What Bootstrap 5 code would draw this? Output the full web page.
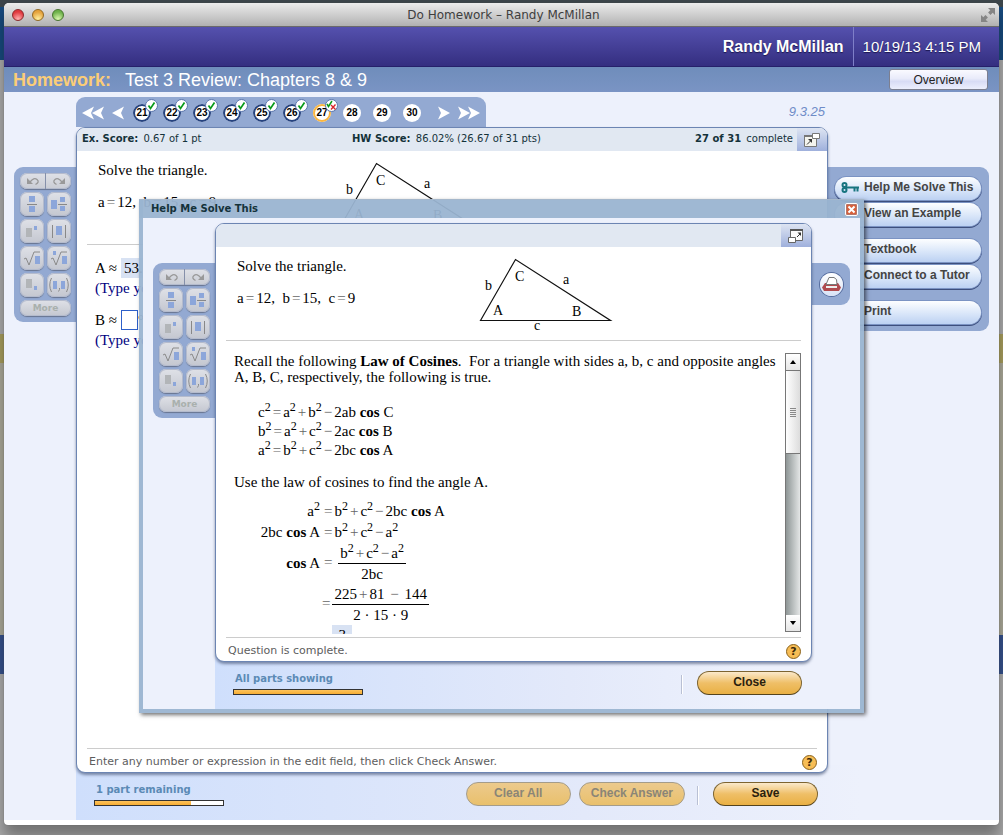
<!DOCTYPE html>
<html lang="en">
<head>
<meta charset="utf-8">
<meta name="viewport" content="width=device-width, initial-scale=1">
<title>Do Homework – Randy McMillan</title>
<link href="https://cdn.jsdelivr.net/npm/bootstrap@5.3.0/dist/css/bootstrap.min.css" rel="stylesheet">
<style>
  :root {
    --panel: #93a9d2;
    --page: #edf1fc;
    --edge: #6c85b3;
    --verdana: "DejaVu Sans", Verdana, sans-serif;
    --arial: "Liberation Sans", Arial, sans-serif;
    --times: "Liberation Serif", "Times New Roman", serif;
  }
  body {
    min-height: 100vh;
    padding: 3px 4px 10px;
    font-family: var(--arial);
    font-size: 12px;
    line-height: 16px;
    color: #000;
    background: linear-gradient(#3c454a 0 7px, #17497c 7px 60px, #a9a9a9 60px 334px, #a69c5c 334px 363px, #a9a797 363px 635px, #35508a 635px 674px, #a9a9a9 674px);
  }
  button { font-family: inherit; padding: 0; border: 0; background: none; }
  svg { display: block; }

  /* application window */
  .app-window { min-height: calc(100vh - 13px); border-radius: 5px 5px 4px 4px; background: #fff; padding-bottom: 5px; box-shadow: 0 0 1px 0 #555, 0 12px 14px 0 rgba(0,0,0,.32); }
  .titlebar { height: 24px; border-bottom: 1px solid #6a6a6a; border-radius: 5px 5px 0 0; background: linear-gradient(#ececec, #b1b1b1); padding: 0 4px 0 8px; }
  .titlebar h1 { font: 12px/22px var(--verdana); color: #3e3e3e; margin: 0; }
  .light { width: 12px; height: 12px; border-radius: 50%; border: 1px solid; }
  .light-red { background: radial-gradient(circle at 50% 90%, #ffb0b0, #e0383e 70%); border-color: #8d2a2c; }
  .light-amber { background: radial-gradient(circle at 50% 90%, #fff0a0, #e5a23c 70%); border-color: #936a22; }
  .light-green { background: radial-gradient(circle at 50% 90%, #dcf8b0, #6db14a 70%); border-color: #47752f; }
  .lights { gap: 8px; }
  .side { width: 72px; }
  .user-bar { height: 40px; border-bottom: 1px solid #26206a; background: linear-gradient(#5551ae, #342e80); color: #fff; text-shadow: 0 1px 1px #1c1850; }
  .user-name { font-size: 16px; font-weight: bold; padding-right: 9px; }
  .user-time { font-size: 15px; padding: 0 18px 0 9px; border-left: 1px solid #7f7fc8; line-height: 39px; }
  .course-bar { height: 25px; background: linear-gradient(#6f8dbb, #7a94c4); padding: 0 11px 0 9px; color: #fff; }
  .course-bar h2 { font-size: 18px; line-height: 24px; margin: 0; font-weight: normal; }
  .course-bar strong { color: #fbcd77; margin-right: 14px; }
  .btn-overview { width: 99px; height: 21px; border: 1px solid #7c7f90; border-radius: 3px; background: linear-gradient(#fafaff, #e9ebfa 45%, #d8dcf5 60%, #eceffd); color: #222; }

  /* shared work area: side rails, sheet, action bar */
  .workspace { background: var(--page); }
  .rail-left { width: 72px; padding: 40px 0 0 10px; flex-shrink: 0; }
  .rail-left-main { padding-top: 75px; }
  .rail-right-main { width: 171px; flex-shrink: 0; }
  .rail-right-help { width: 48px; padding-top: 40px; flex-shrink: 0; }
  .palette { background: var(--panel); border-radius: 9px 0 0 9px; padding: 6px 5px 6px 6px; display: grid; grid-template-columns: 24px 24px; gap: 3px; }
  .tool-key { height: 24px; border-radius: 7px; background: linear-gradient(#dfe1e7, #c4c7d0); box-shadow: 0 0 0 1px #b4bbcd inset, 0 1px 1px #68748f; }
  .tool-key svg { margin: auto; }
  .history { grid-column: span 2; height: 16px; border-radius: 7px; overflow: hidden; background: linear-gradient(#dfe1e7, #c9ccd4); box-shadow: 0 0 0 1px #b4bbcd inset, 0 1px 1px #68748f; }
  .history button { flex: 1; }
  .history button + button { border-left: 1px solid #8590aa; }
  .history svg { margin: auto; }
  .key-more { grid-column: span 2; height: 16px; font: bold 9px/14px var(--verdana); color: #a9b0ad; }
  .sheet { background: #fff; border: 1px solid var(--edge); border-radius: 9px; box-shadow: 0 2px 3px rgba(60,75,110,.6); overflow: hidden; position: relative; }
  .sheet-head { height: 23px; background: #e1e8f2; font: 10px/22px var(--verdana); color: #14323a; }
  .sheet-head .scores { padding-left: 5px; }
  .sheet-head .score-ex { width: 270px; }
  .sheet-head b { margin-right: 2px; }
  .pop-btn { width: 30px; height: 23px; background: linear-gradient(#dde4f2, #9fb0dc); }
  .question { min-height: 94px; margin: 0 10px; padding-left: 11px; border-bottom: 1px solid #ccc; }
  .question-text { width: 238px; padding-top: 11px; }
  .question-text p { margin-bottom: 16px; }
  .serif { font-family: var(--times); font-size: 15px; line-height: 16px; }
  .eq { color: #666; margin: 0 2px; }
  .figure { margin-top: 7px; }
  .figure text { font-family: var(--times); font-size: 14px; }
  .sheet-foot { height: 24px; margin: 0 10px; border-top: 1px solid #ccc; font: 11px/16px var(--verdana); color: #5d5d5d; padding: 3px 0 0 2px; }
  .help-dot { width: 15px; height: 15px; border: 1px solid #8a621c; border-radius: 50%; background: #f7bd55; font: bold 11px/13px var(--verdana); color: #3c2a08; }
  .action-bar { height: 55px; background: linear-gradient(90deg, #cfdffc, #e3e9fa 55%, var(--page) 85%); margin: -8px 0 0 72px; padding: 17px 0 0 18px; }
  .action-bar-main { padding-right: 181px; }
  .action-bar-help { padding-right: 58px; }
  .progress-label { font: bold 10px/16px var(--verdana); color: #5b8ab5; padding-left: 2px; }
  .meter { width: 130px; height: 6px; border: 1px solid #333; border-radius: 0; background: #fff; margin-top: 2px; }
  .meter .progress-bar { background: linear-gradient(#fdc35c, #f6ad33); }
  .pill { min-width: 105px; height: 24px; border: 1px solid #7d6431; border-bottom-color: #54431d; border-radius: 12px; background: linear-gradient(#fbe9cb, #efbf67 50%, #e9b044); font-weight: bold; font-size: 12px; line-height: 18px; padding: 0 11px 3px; color: #2a210e; }
  .pill:disabled { background: linear-gradient(#ecca8d, #e9c06c); border-color: #a49c8a; color: #8a8577; }
  .bar-divider { width: 2px; height: 19px; border-left: 1px solid #b9c0d4; border-right: 1px solid #fff; margin: 4px 14px 0 12px; }

  /* question navigator */
  .nav-row { padding-top: 1px; }
  .qnav { background: var(--panel); border-radius: 9px 9px 0 0; height: 30px; padding: 2px 6px 0 6px; }
  .qnav-list { gap: 12px; margin: 0 17px 0 9px; }
  .q-dot { position: relative; width: 18px; height: 18px; border-radius: 50%; background: #fff; font-weight: bold; font-size: 10px; line-height: 18px; text-align: center; color: #000; }
  .q-done { box-shadow: 0 0 0 2px #26437f inset; }
  .q-current { box-shadow: 0 0 0 2px #fbb63f inset; }
  .q-flag { position: absolute; left: 12px; top: -5px; }
  .section-no { font-size: 13px; font-style: italic; color: #6f8cc8; padding-right: 3px; }

  /* right-hand help links */
  .help-panel { margin-top: 75px; width: 161px; background: var(--panel); border-radius: 0 9px 9px 0; padding: 10px 8px 7px 7px; }
  .help-link { height: 23px; border-radius: 12px; background: linear-gradient(#fdfeff, #d9e6f9 55%, #bcd1f2); box-shadow: 0 0 0 1px #7b93c3, 0 1px 0 1px #3d4f7d; font-weight: bold; line-height: 20px; color: #444; text-decoration: none; padding-left: 6px; margin-bottom: 3px; }
  .help-link.section-end { margin-bottom: 13px; }
  .help-link .ico { width: 23px; }
  .print-panel { background: var(--panel); width: 38px; height: 42px; border-radius: 0 9px 9px 0; }
  .print-btn { width: 23px; height: 23px; border-radius: 50%; background: linear-gradient(#fff, #d7e2f6); box-shadow: 0 0 0 1px #566d9f; }

  /* answer fields in the exercise */
  .answers { padding: 13px 0 0 18px; }
  .answers .hint { color: #000080; margin: 2px 0 14px; }
  .given { background: #d8e2f3; height: 20px; padding: 2px 3px; margin-left: 4px; }
  .answer-box { width: 17px; height: 20px; border: 1px solid #2d5fc9; margin-left: 4px; padding: 0; }

  /* floating help dialog */
  .help-dialog { position: absolute; left: 135px; right: 135px; top: 196px; border: 4px solid rgba(154,180,209,.95); border-top: 0; background-clip: padding-box; box-shadow: 2px 2px 4px rgba(0,0,0,.55); z-index: 5; }
  .dialog-title { margin: 0 -4px; height: 19px; border-top: 1px solid #a5b7cb; background: rgba(154,180,209,.95); padding: 0 6px 0 12px; }
  .dialog-title h3 { font: bold 10px/18px var(--verdana); color: #14323a; margin: 0; }
  .dialog-close { width: 13px; height: 13px; border: 1px solid #fff; background: #d7603b; border-radius: 2px; box-shadow: 0 0 0 1px #b5766a inset; }
  .dialog-body { padding-top: 5px; }

  /* scrolling lesson text */
  .lesson { height: 281px; margin: 12px 10px 3px 18px; }
  .lesson-text { overflow: hidden; flex: 1; min-width: 0; }
  .lesson-text p { margin: 0; }
  .lesson-text .next-step { padding-top: 14px; }
  .laws { padding: 18px 0 0 24px; line-height: 19px; }
  .lesson sup { font-size: 12px; line-height: 0; top: -6px; vertical-align: baseline; }
  .steps { display: grid; grid-template-columns: 86px auto; align-items: center; margin-top: 11px; line-height: 21px; }
  .steps .lhs { text-align: right; }
  .steps .rhs { padding-left: 2px; }
  .frac { display: inline-block; text-align: center; vertical-align: middle; }
  .frac > span { display: block; line-height: 20px; }
  .frac > span:first-child { border-bottom: 1px solid #000; padding: 0 2px; }
  .frac-known { background: #d8e2f3; padding: 0 4px; }
  .vbar { width: 16px; height: 279px; border: 1px solid #777; background: linear-gradient(90deg, #8e9696, #e4e6e6); }
  .vbar button { height: 16px; background: linear-gradient(#fff, #e6e6e6); }
  .vbar button svg { margin: auto; }
  .vthumb { height: 84px; border: 1px solid #777; border-width: 1px 0; background: linear-gradient(90deg, #fff, #dcdcdc); }
</style>
</head>
<body>

<svg width="0" height="0" class="position-absolute" aria-hidden="true">
  <symbol id="i-frac" viewBox="0 0 16 18"><path fill="#8ca6da" d="M5 1h6v6H5zM5 11h6v6H5z"/><path stroke="#888" d="M3 9.5h10"/></symbol>
  <symbol id="i-mixed" viewBox="0 0 18 18"><path fill="#8ca6da" d="M1 5h6v9H1zM10 2h5v5h-5zM10 11h5v5h-5z"/><path stroke="#888" d="M8 9.500h9"/></symbol>
  <symbol id="i-sup" viewBox="0 0 16 18"><path fill="#b2b5b8" d="M2 6h6v9H2z"/><path fill="#8ca6da" d="M10 4h3v4h-3z"/></symbol>
  <symbol id="i-abs" viewBox="0 0 18 18"><path fill="#8ca6da" d="M6 4h6v9H6z"/><path stroke="#888" d="M2.500 3v13M15.500 3v13"/></symbol>
  <symbol id="i-sqrt" viewBox="0 0 18 18"><path fill="#8ca6da" d="M12 7h5v8h-5z"/><path fill="none" stroke="#8a8a8a" d="M1 10l2-1 3 7 5-13h6"/></symbol>
  <symbol id="i-root" viewBox="0 0 18 18"><path fill="#8ca6da" d="M12 7h5v8h-5zM3 2h3v4H3z"/><path fill="none" stroke="#8a8a8a" d="M1 10l2-1 3 7 5-13h6"/></symbol>
  <symbol id="i-sub" viewBox="0 0 16 18"><path fill="#b2b5b8" d="M2 3h6v9H2z"/><path fill="#8ca6da" d="M10 10h3v4h-3z"/></symbol>
  <symbol id="i-pair" viewBox="0 0 22 18"><path fill="#8ca6da" d="M5 5h4v8H5zM13 5h4v8h-4z"/><path fill="none" stroke="#8a8a8a" d="M3.500 2q-3.500 7 0 14M18.500 2q3.500 7 0 14M11.500 12v1.500l-1 2"/></symbol>
  <symbol id="i-undo" viewBox="0 0 14 10"><path fill="none" stroke="#999" stroke-width="1.300" d="M4 6q4-5 7-2.500t-1.500 5"/><path fill="#999" d="M1 2v6h6z"/></symbol>
  <symbol id="i-redo" viewBox="0 0 14 10"><path fill="none" stroke="#999" stroke-width="1.300" d="M10 6q-4-5-7-2.500t1.500 5"/><path fill="#999" d="M13 2v6H7z"/></symbol>
  <symbol id="i-tick" viewBox="0 0 13 13"><circle cx="6.500" cy="6.500" r="6" fill="#fff" stroke="#5b76ac"/><path fill="none" stroke="#0b9a1b" stroke-width="1.700" d="M3.500 6.500l2 3 4-6"/></symbol>
  <symbol id="i-part" viewBox="0 0 13 13"><circle cx="6.500" cy="6.500" r="6" fill="#fff" stroke="#5b76ac"/><path fill="none" stroke="#0b9a1b" stroke-width="1.500" d="M2 5l1.500 2.500L7 2"/><path stroke="#d8272d" stroke-width="1.400" d="M6 6l4.500 4.500M10.500 5.500L6 10.500"/></symbol>
  <symbol id="i-popout" viewBox="0 0 16 14"><path fill="#f4f4ee" stroke="#777" d="M.5 2.500h12v11H.5z"/><path fill="#777" d="M0 2h9v2H0z"/><path fill="#fff" stroke="#777" d="M8.500.5h7v5h-7z"/><path stroke="#333" d="M3 11.500l4-4"/><path fill="#333" d="M8 6v4L4 6z"/></symbol>
  <symbol id="i-popin" viewBox="0 0 16 14"><path fill="#fafafa" stroke="#666" d="M2.500.5h12v11h-12z"/><path fill="#555" d="M2 0h13v2H2z"/><path fill="#fff" stroke="#666" d="M.5 8.500h7v5h-7z"/><path stroke="#333" d="M9 8l3-3"/><path fill="#333" d="M13 3.500v3.500l-3.500-3.500z"/></symbol>
  <symbol id="i-tri" viewBox="0 0 145 84"><path fill="none" stroke="#111" stroke-width="1.200" d="M5.500 66.500L40.500 5.500 135.500 66.500z"/></symbol>
</svg>

<main class="app-window position-relative d-flex flex-column">
  <header class="titlebar d-flex align-items-center">
    <div class="side lights d-flex"><span class="light light-red"></span><span class="light light-amber"></span><span class="light light-green"></span></div>
    <h1 class="flex-grow-1 text-center">Do Homework – Randy McMillan</h1>
    <div class="side d-flex justify-content-end">
      <svg width="14" height="14" viewBox="0 0 14 14" fill="#858585"><path d="M7 0h7v7l-2.300-2.300-2.200 2.200-2.400-2.400 2.200-2.200zM0 7l2.300 2.300 2.200-2.200 2.400 2.400-2.200 2.200L7 14H0z"/></svg>
    </div>
  </header>
  <div class="user-bar d-flex justify-content-end align-items-center">
    <span class="user-name">Randy McMillan</span><span class="user-time">10/19/13 4:15 PM</span>
  </div>
  <div class="course-bar d-flex justify-content-between align-items-center">
    <h2><strong>Homework:</strong>Test 3 Review: Chapters 8 &amp; 9</h2>
    <button class="btn-overview" type="button">Overview</button>
  </div>

  <section class="workspace flex-grow-1 d-flex flex-column">
    <div class="d-flex flex-grow-1">
      <aside class="rail-left rail-left-main">
        <div class="palette">
          <div class="history d-flex"><button aria-label="Undo"><svg width="14" height="10"><use href="#i-undo"/></svg></button><button aria-label="Redo"><svg width="14" height="10"><use href="#i-redo"/></svg></button></div>
          <button class="tool-key" aria-label="Fraction"><svg width="16" height="18"><use href="#i-frac"/></svg></button>
          <button class="tool-key" aria-label="Mixed number"><svg width="18" height="18"><use href="#i-mixed"/></svg></button>
          <button class="tool-key" aria-label="Exponent"><svg width="16" height="18"><use href="#i-sup"/></svg></button>
          <button class="tool-key" aria-label="Absolute value"><svg width="18" height="18"><use href="#i-abs"/></svg></button>
          <button class="tool-key" aria-label="Square root"><svg width="18" height="18"><use href="#i-sqrt"/></svg></button>
          <button class="tool-key" aria-label="Root"><svg width="18" height="18"><use href="#i-root"/></svg></button>
          <button class="tool-key" aria-label="Subscript"><svg width="16" height="18"><use href="#i-sub"/></svg></button>
          <button class="tool-key" aria-label="Ordered pair"><svg width="22" height="18"><use href="#i-pair"/></svg></button>
          <button class="tool-key key-more">More</button>
        </div>
      </aside>

      <div class="flex-grow-1 d-flex flex-column pt-1">
        <div class="nav-row d-flex justify-content-between align-items-center">
          <nav class="qnav d-flex align-items-center" aria-label="Questions">
            <button aria-label="First"><svg width="22" height="14" viewBox="0 0 22 14" fill="#fff"><path d="M0 7l12-6.500L9 7l3 6.500zM10 7l12-6.500L19 7l3 6.500z"/></svg></button>
            <button aria-label="Previous" class="ms-2"><svg width="12" height="14" viewBox="0 0 12 14" fill="#fff"><path d="M0 7l12-6.500L9 7l3 6.500z"/></svg></button>
            <div class="qnav-list d-flex">
              <button class="q-dot q-done">21<svg class="q-flag" width="13" height="13"><use href="#i-tick"/></svg></button>
              <button class="q-dot q-done">22<svg class="q-flag" width="13" height="13"><use href="#i-tick"/></svg></button>
              <button class="q-dot q-done">23<svg class="q-flag" width="13" height="13"><use href="#i-tick"/></svg></button>
              <button class="q-dot q-done">24<svg class="q-flag" width="13" height="13"><use href="#i-tick"/></svg></button>
              <button class="q-dot q-done">25<svg class="q-flag" width="13" height="13"><use href="#i-tick"/></svg></button>
              <button class="q-dot q-done">26<svg class="q-flag" width="13" height="13"><use href="#i-tick"/></svg></button>
              <button class="q-dot q-current">27<svg class="q-flag" width="13" height="13"><use href="#i-part"/></svg></button>
              <button class="q-dot">28</button>
              <button class="q-dot">29</button>
              <button class="q-dot">30</button>
            </div>
            <button aria-label="Next"><svg width="12" height="14" viewBox="0 0 12 14" fill="#fff"><path d="M12 7L0 .5 3 7l-3 6.500z"/></svg></button>
            <button aria-label="Last" class="ms-2"><svg width="22" height="14" viewBox="0 0 22 14" fill="#fff"><path d="M12 7L0 .5 3 7l-3 6.500zM22 7L10 .5 13 7l-3 6.500z"/></svg></button>
          </nav>
          <span class="section-no">9.3.25</span>
        </div>

        <article class="sheet flex-grow-1 d-flex flex-column">
          <div class="sheet-head d-flex">
            <div class="scores d-flex"><div class="score-ex"><b>Ex. Score:</b> 0.67 of 1 pt</div>
            <div><b>HW Score:</b> 86.02% (26.67 of 31 pts)</div></div>
            <div class="ms-auto me-1"><b>27 of 31</b> complete</div>
            <button class="pop-btn" aria-label="Open in new window"><svg class="m-auto" width="16" height="14"><use href="#i-popout"/></svg></button>
          </div>
          <div class="question d-flex serif">
            <div class="question-text"><p>Solve the triangle.</p><p>a<span class="eq">=</span>12,&nbsp; b<span class="eq">=</span>15,&nbsp; c<span class="eq">=</span>9</p></div>
            <svg class="figure" width="145" height="84"><use href="#i-tri"/><text x="10" y="36">b</text><text x="40" y="27">C</text><text x="88" y="30">a</text><text x="18" y="61">A</text><text x="97" y="62">B</text><text x="59" y="76">c</text></svg>
          </div>
          <div class="answers serif flex-grow-1">
            <div class="d-flex align-items-center">A ≈<span class="given">53.1°</span></div>
            <div class="hint">(Type your answer.)</div>
            <label class="d-flex align-items-center">B ≈<input class="answer-box" type="text">°</label>
            <div class="hint">(Type your answer.)</div>
          </div>
          <div class="sheet-foot d-flex justify-content-between align-items-center"><span>Enter any number or expression in the edit field, then click Check Answer.</span><button class="help-dot" aria-label="Help">?</button></div>
        </article>
      </div>

      <aside class="rail-right-main">
        <nav class="help-panel d-flex flex-column">
          <a class="help-link d-flex" href="#"><span class="ico pt-1"><svg width="19" height="13" viewBox="0 0 19 13" fill="none" stroke="#17747f" stroke-width="2"><circle cx="3.500" cy="4" r="2"/><circle cx="3.500" cy="9" r="2"/><path d="M5 6.500h13M13.500 6v4.500M16.500 6v4.500"/></svg></span>Help Me Solve This</a>
          <a class="help-link section-end d-flex" href="#"><span class="ico"></span>View an Example</a>
          <a class="help-link d-flex" href="#"><span class="ico"></span>Textbook</a>
          <a class="help-link section-end d-flex" href="#"><span class="ico"></span>Connect to a Tutor</a>
          <a class="help-link d-flex mb-0" href="#"><span class="ico"></span>Print</a>
        </nav>
      </aside>
    </div>
    <footer class="action-bar action-bar-main d-flex">
      <div>
        <div class="progress-label" id="main-progress">1 part remaining</div>
        <div class="progress meter" role="progressbar" aria-labelledby="main-progress"><div class="progress-bar" style="width:75%"></div></div>
      </div>
      <div class="ms-auto d-flex">
        <button class="pill me-2" disabled>Clear All</button>
        <button class="pill" disabled>Check Answer</button>
        <span class="bar-divider"></span>
        <button class="pill">Save</button>
      </div>
    </footer>
  </section>

  <section class="help-dialog" role="dialog" aria-labelledby="dlg-title">
    <div class="dialog-title d-flex justify-content-between align-items-center">
      <h3 id="dlg-title">Help Me Solve This</h3>
      <button class="dialog-close" aria-label="Close"><svg width="11" height="11" viewBox="0 0 11 11"><path stroke="#fff" stroke-width="2" d="M2.500 2.500l6 6M8.500 2.500l-6 6"/></svg></button>
    </div>
    <div class="workspace">
      <div class="dialog-body d-flex">
        <aside class="rail-left">
          <div class="palette">
            <div class="history d-flex"><button aria-label="Undo"><svg width="14" height="10"><use href="#i-undo"/></svg></button><button aria-label="Redo"><svg width="14" height="10"><use href="#i-redo"/></svg></button></div>
            <button class="tool-key" aria-label="Fraction"><svg width="16" height="18"><use href="#i-frac"/></svg></button>
            <button class="tool-key" aria-label="Mixed number"><svg width="18" height="18"><use href="#i-mixed"/></svg></button>
            <button class="tool-key" aria-label="Exponent"><svg width="16" height="18"><use href="#i-sup"/></svg></button>
            <button class="tool-key" aria-label="Absolute value"><svg width="18" height="18"><use href="#i-abs"/></svg></button>
            <button class="tool-key" aria-label="Square root"><svg width="18" height="18"><use href="#i-sqrt"/></svg></button>
            <button class="tool-key" aria-label="Root"><svg width="18" height="18"><use href="#i-root"/></svg></button>
            <button class="tool-key" aria-label="Subscript"><svg width="16" height="18"><use href="#i-sub"/></svg></button>
            <button class="tool-key" aria-label="Ordered pair"><svg width="22" height="18"><use href="#i-pair"/></svg></button>
            <button class="tool-key key-more">More</button>
          </div>
        </aside>
        <article class="sheet flex-grow-1 d-flex flex-column">
          <div class="sheet-head d-flex justify-content-end"><button class="pop-btn" aria-label="Restore window"><svg class="m-auto" width="16" height="14"><use href="#i-popin"/></svg></button></div>
          <div class="question d-flex serif">
            <div class="question-text"><p>Solve the triangle.</p><p>a<span class="eq">=</span>12,&nbsp; b<span class="eq">=</span>15,&nbsp; c<span class="eq">=</span>9</p></div>
            <svg class="figure" width="145" height="84"><use href="#i-tri"/><text x="10" y="36">b</text><text x="40" y="27">C</text><text x="88" y="30">a</text><text x="18" y="61">A</text><text x="97" y="62">B</text><text x="59" y="76">c</text></svg>
          </div>
          <div class="lesson d-flex serif">
            <div class="lesson-text">
              <p>Recall the following <b>Law of Cosines</b>.&nbsp; For a triangle with sides a, b, c and opposite angles A, B, C, respectively, the following is true.</p>
              <div class="laws">
                <div>c<sup>2</sup><span class="eq">=</span>a<sup>2</sup><span class="eq">+</span>b<sup>2</sup><span class="eq">−</span>2ab <b>cos</b> C</div>
                <div>b<sup>2</sup><span class="eq">=</span>a<sup>2</sup><span class="eq">+</span>c<sup>2</sup><span class="eq">−</span>2ac <b>cos</b> B</div>
                <div>a<sup>2</sup><span class="eq">=</span>b<sup>2</sup><span class="eq">+</span>c<sup>2</sup><span class="eq">−</span>2bc <b>cos</b> A</div>
              </div>
              <p class="next-step">Use the law of cosines to find the angle A.</p>
              <div class="steps">
                <div class="lhs">a<sup>2</sup></div><div class="rhs"><span class="eq">=</span>b<sup>2</sup><span class="eq">+</span>c<sup>2</sup><span class="eq">−</span>2bc <b>cos</b> A</div>
                <div class="lhs">2bc <b>cos</b> A</div><div class="rhs"><span class="eq">=</span>b<sup>2</sup><span class="eq">+</span>c<sup>2</sup><span class="eq">−</span>a<sup>2</sup></div>
                <div class="lhs"><b>cos</b> A</div><div class="rhs"><span class="eq">=</span> <span class="frac"><span>b<sup>2</sup><span class="eq">+</span>c<sup>2</sup><span class="eq">−</span>a<sup>2</sup></span><span>2bc</span></span></div>
                <div class="lhs"></div><div><span class="eq">=</span><span class="frac"><span>225<span class="eq">+</span>81<span class="eq">&nbsp;−&nbsp;</span>144</span><span>2 · 15 · 9</span></span></div>
                <div class="lhs"></div><div><span class="eq">=</span><span class="frac frac-known"><span>3</span><span>5</span></span></div>
              </div>
            </div>
            <div class="vbar d-flex flex-column">
              <button aria-label="Scroll up"><svg width="6" height="4"><path d="M3 0l3 4H0z"/></svg></button>
              <div class="vthumb d-flex align-items-center justify-content-center"><svg width="6" height="9" stroke="#888"><path d="M0 .5h6M0 2.500h6M0 4.500h6M0 6.500h6M0 8.500h6"/></svg></div>
              <button aria-label="Scroll down" class="mt-auto"><svg width="6" height="4"><path d="M0 0h6L3 4z"/></svg></button>
            </div>
          </div>
          <div class="sheet-foot d-flex justify-content-between align-items-center"><span>Question is complete.</span><button class="help-dot" aria-label="Help">?</button></div>
        </article>
        <aside class="rail-right-help">
          <div class="print-panel d-flex align-items-center justify-content-center">
            <button class="print-btn" aria-label="Print"><svg class="m-auto" width="19" height="17" viewBox="0 0 19 17"><path fill="#b04a4f" d="M3 7h13l3 4.500-2 3.500H2l-2-3.500z"/><path fill="#fff" stroke="#777" d="M7 1.500h5l2.500 2 .5 5H4z"/><path stroke="#eee" stroke-width="2" d="M4 11h11"/></svg></button>
          </div>
        </aside>
      </div>
      <footer class="action-bar action-bar-help d-flex">
        <div>
          <div class="progress-label" id="help-progress">All parts showing</div>
          <div class="progress meter" role="progressbar" aria-labelledby="help-progress"><div class="progress-bar" style="width:100%"></div></div>
        </div>
        <div class="ms-auto d-flex">
          <span class="bar-divider"></span>
          <button class="pill">Close</button>
        </div>
      </footer>
    </div>
  </section>
</main>
<script src="https://cdn.jsdelivr.net/npm/bootstrap@5.3.0/dist/js/bootstrap.bundle.min.js"></script>
</body>
</html>
